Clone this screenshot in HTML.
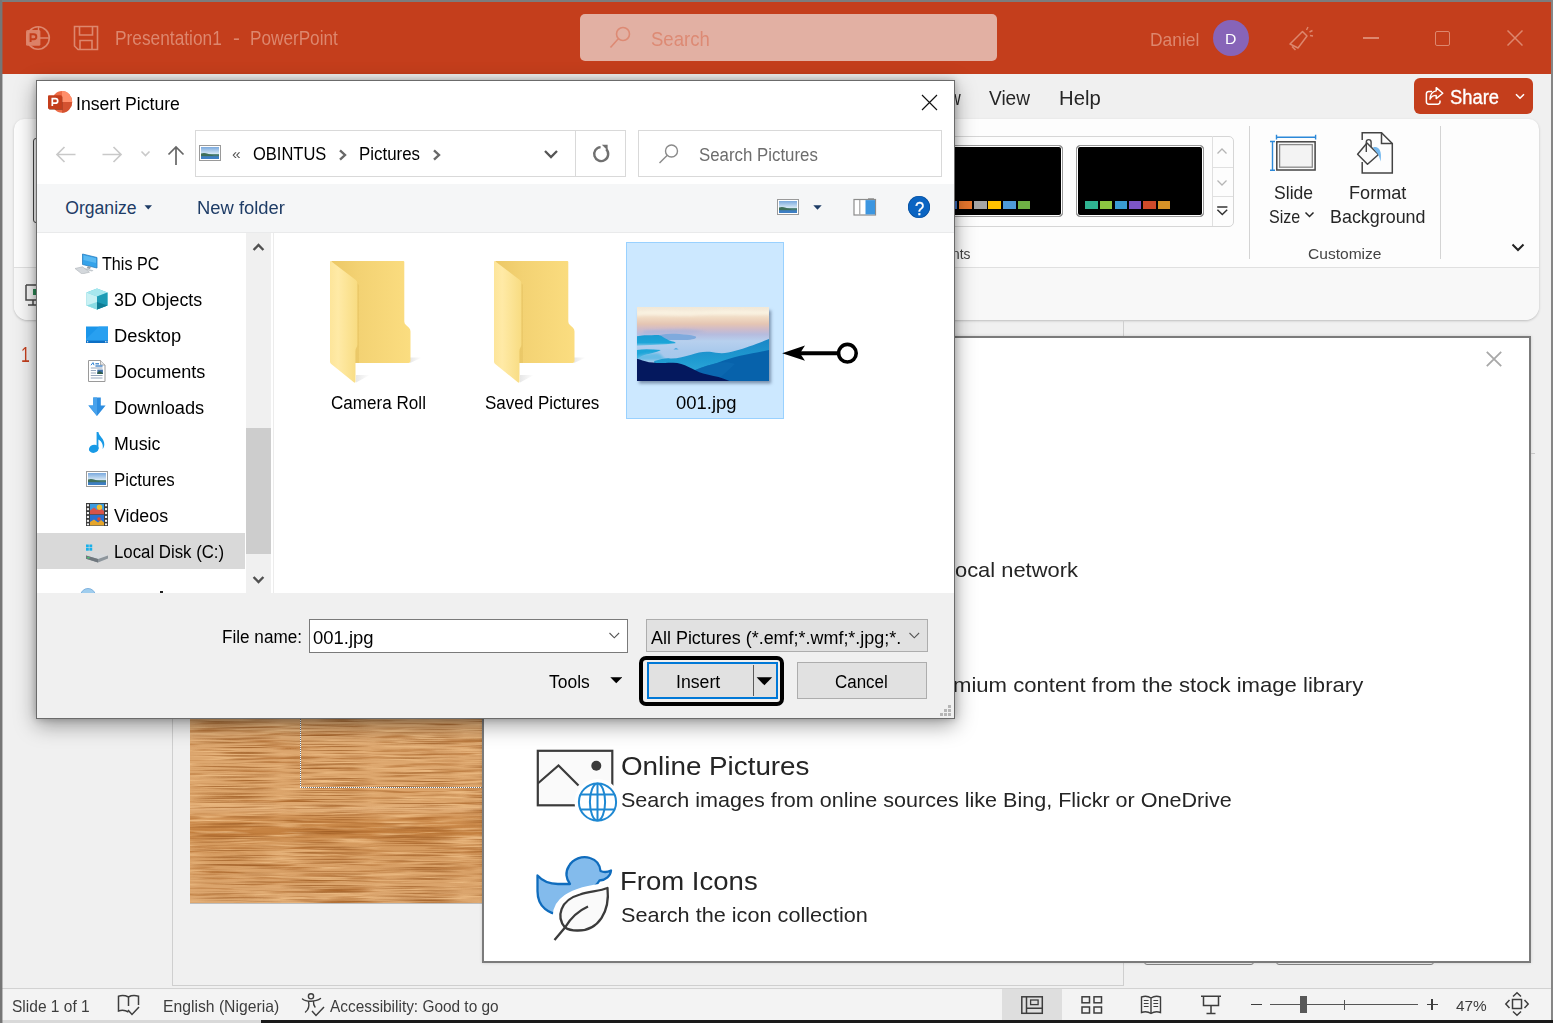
<!DOCTYPE html>
<html>
<head>
<meta charset="utf-8">
<title>Insert Picture - PowerPoint</title>
<style>
*{box-sizing:border-box;margin:0;padding:0}
html,body{width:1553px;height:1023px;overflow:hidden;background:#f0f0f0;font-family:"Liberation Sans",sans-serif;}
.a{position:absolute}
.t{position:absolute;white-space:nowrap;line-height:1;transform-origin:0 0}
#app{position:absolute;left:0;top:0;width:1553px;height:1023px;overflow:hidden}
</style>
</head>
<body>
<div id="app">
<div class="a" style="left:0px;top:0px;width:1553px;height:1023px;background:#f0f0f0;"></div>
<div class="a" style="left:2px;top:2px;width:1551px;height:72px;background:#c43e1c;"></div>
<svg class="a" style="left:24px;top:24px;" width="28" height="28" viewBox="0 0 28 28"><circle cx="14.1" cy="14" r="11.2" fill="none" stroke="#dd876e" stroke-width="1.6"/>
      <path d="M14.5 3 V14 H25.3" fill="none" stroke="#dd876e" stroke-width="1.4"/>
      <rect x="2" y="6" width="14.4" height="15.8" rx="1.5" fill="#dd876e" opacity=".92"/>
      <path d="M6.6 18 V10.2 H9.8 a2.5 2.5 0 0 1 0 5 H6.6" fill="none" stroke="#c43e1c" stroke-width="1.9"/></svg>
<svg class="a" style="left:73px;top:25px;" width="26" height="26" viewBox="0 0 26 26"><path d="M1.5 1.5 H24.5 V24.5 H5 L1.5 21 Z" fill="none" stroke="#dd876e" stroke-width="1.6"/>
      <path d="M6.5 1.5 V10 H19.5 V1.5 M7 24.5 V15.5 H19 V24.5" fill="none" stroke="#dd876e" stroke-width="1.6"/></svg>
<div class="t" style="left:114.97px;top:29.39px;font-size:19.5px;color:#dd876e;transform:scaleX(0.8873);">Presentation1</div>
<div class="t" style="left:233.20px;top:29.39px;font-size:19.5px;color:#dd876e;transform:scaleX(1.0600);">-</div>
<div class="t" style="left:250.18px;top:29.39px;font-size:19.5px;color:#dd876e;transform:scaleX(0.8804);">PowerPoint</div>
<div class="a" style="left:580px;top:14px;width:417px;height:47px;background:#e2b0a3;border-radius:5px"></div>
<svg class="a" style="left:608px;top:25px;" width="26" height="26" viewBox="0 0 26 26"><circle cx="15" cy="9" r="6.5" fill="none" stroke="#dd8a74" stroke-width="1.6"/><path d="M10.3 13.7 L2.5 22.5" stroke="#dd8a74" stroke-width="1.6" fill="none"/></svg>
<div class="t" style="left:651.32px;top:28.75px;font-size:20.5px;color:#dd8a74;transform:scaleX(0.9048);">Search</div>
<div class="t" style="left:1149.62px;top:29.82px;font-size:19px;color:#dd876e;transform:scaleX(0.9171);">Daniel</div>
<div class="a" style="left:1213px;top:20px;width:36px;height:36px;border-radius:50%;background:#8764b8"></div>
<div class="t" style="left:1225.03px;top:31.38px;font-size:15.5px;color:#fff;transform:scaleX(1.0162);">D</div>
<svg class="a" style="left:1287px;top:24px;" width="28" height="28" viewBox="0 0 28 28"><path d="M3 20 L15.5 7.5 L20 12 L11 24 Z M5 22.5 L8.5 26" fill="none" stroke="#dd876e" stroke-width="1.5" stroke-linejoin="round"/>
       <path d="M19.5 6 L21 3 M22.5 8 L25.5 6.5 M23 11.5 L26 12" stroke="#dd876e" stroke-width="1.4" fill="none"/></svg>
<div class="a" style="left:1363px;top:37px;width:16px;height:1.5px;background:#dd876e;"></div>
<div class="a" style="left:1435px;top:31px;width:15px;height:15px;border:1.5px solid #dd876e;border-radius:2px"></div>
<svg class="a" style="left:1507px;top:30px;" width="16" height="16" viewBox="0 0 16 16"><path d="M0.5 0.5 L15.5 15.5 M15.5 0.5 L0.5 15.5" stroke="#dd876e" stroke-width="1.5"/></svg>
<div class="a" style="left:2px;top:74px;width:1551px;height:48px;background:#f0f0f0;"></div>
<div class="t" style="left:949.21px;top:88.81px;font-size:19.6px;color:#262626;transform:scaleX(0.8276);">w</div>
<div class="t" style="left:989.30px;top:88.81px;font-size:19.6px;color:#262626;transform:scaleX(0.9738);">View</div>
<div class="t" style="left:1059.45px;top:88.81px;font-size:19.6px;color:#262626;transform:scaleX(1.0342);">Help</div>
<div class="a" style="left:1414px;top:78px;width:119px;height:36px;background:#c43e1c;border-radius:6px"></div>
<svg class="a" style="left:1424px;top:85px;" width="22" height="22" viewBox="0 0 22 22"><path d="M8 6.5 H4.6 A2.2 2.2 0 0 0 2.4 8.7 V17 A2.2 2.2 0 0 0 4.6 19.2 H13.8 A2.2 2.2 0 0 0 16 17 V15.5" fill="none" stroke="#fff" stroke-width="1.5"/>
      <path d="M12.2 2.6 L18.8 8.2 L12.2 13.6 V10.4 C9.2 10.4 7.3 11.6 6 14.2 C6.2 9.4 8.6 6.4 12.2 5.9 Z" fill="none" stroke="#fff" stroke-width="1.4" stroke-linejoin="round"/></svg>
<div class="t" style="left:1450.31px;top:87.27px;font-size:20px;color:#fff;transform:scaleX(0.9179);-webkit-text-stroke:.35px #fff">Share</div>
<svg class="a" style="left:1515px;top:93px;" width="10" height="7" viewBox="0 0 10 7"><path d="M1 1.2 L5 5.2 L9 1.2" fill="none" stroke="#fff" stroke-width="1.6"/></svg>
<div class="a" style="left:14px;top:119px;width:1525px;height:201px;background:#fdfdfd;border-radius:10px 10px 14px 14px;box-shadow:0 1px 2.5px rgba(0,0,0,.22)"></div>
<div class="a" style="left:14px;top:267px;width:1525px;height:1px;background:#e0e0e0;"></div>
<div class="a" style="left:14px;top:268px;width:1525px;height:52px;background:#f8f8f8;border-radius:0 0 14px 14px"></div>
<div class="a" style="left:33px;top:138px;width:6px;height:85px;background:#fff;border:1.5px solid #4a4a4a;border-radius:3px"></div>
<svg class="a" style="left:24px;top:283px;" width="16" height="24" viewBox="0 0 16 24"><path d="M2 2 H16 M2 2 V17 H16 M9 17 V22 M4 22 H16" fill="none" stroke="#4a4a4a" stroke-width="1.5"/><rect x="9" y="6" width="6" height="6" fill="#2e8b57"/></svg>
<div class="a" style="left:900px;top:136px;width:334px;height:91px;background:#fdfdfd;border:1px solid #d6d6d6;border-radius:5px"></div>
<div class="a" style="left:935px;top:145px;width:128px;height:72px;background:#000;border:1px solid #9a9a9a;border-radius:4px;box-shadow:0 0 0 1px #fff inset"></div><div class="a" style="left:944.5px;top:201px;width:12.5px;height:7.6px;background:#3c6fc4;"></div><div class="a" style="left:959px;top:201px;width:12.5px;height:7.6px;background:#e8772e;"></div><div class="a" style="left:974px;top:201px;width:12.5px;height:7.6px;background:#a5a5a5;"></div><div class="a" style="left:988px;top:201px;width:12.5px;height:7.6px;background:#ffc000;"></div><div class="a" style="left:1003px;top:201px;width:12.5px;height:7.6px;background:#4e9bd8;"></div><div class="a" style="left:1017.5px;top:201px;width:12.5px;height:7.6px;background:#6fb144;"></div>
<div class="a" style="left:1076px;top:145px;width:128px;height:72px;background:#000;border:1px solid #9a9a9a;border-radius:4px;box-shadow:0 0 0 1px #fff inset"></div><div class="a" style="left:1085px;top:201px;width:12.5px;height:7.6px;background:#2fb391;"></div><div class="a" style="left:1099.5px;top:201px;width:12.5px;height:7.6px;background:#8dc641;"></div><div class="a" style="left:1114.5px;top:201px;width:12.5px;height:7.6px;background:#3a9bd3;"></div><div class="a" style="left:1128.5px;top:201px;width:12.5px;height:7.6px;background:#7c55c7;"></div><div class="a" style="left:1143px;top:201px;width:12.5px;height:7.6px;background:#cf4a2b;"></div><div class="a" style="left:1157.5px;top:201px;width:12.5px;height:7.6px;background:#d79327;"></div>
<div class="a" style="left:1212px;top:136px;width:1px;height:90px;background:#e0e0e0;"></div>
<div class="a" style="left:1212px;top:167px;width:21px;height:1px;background:#e0e0e0;"></div>
<div class="a" style="left:1212px;top:196px;width:21px;height:1px;background:#e0e0e0;"></div>
<svg class="a" style="left:1216px;top:147.3px;" width="12" height="8" viewBox="0 0 12 8"><path d="M1.5 6.5 L6 2 L10.5 6.5" fill="none" stroke="#b5b5b5" stroke-width="1.3"/></svg>
<svg class="a" style="left:1216px;top:179px;" width="12" height="8" viewBox="0 0 12 8"><path d="M1.5 1.5 L6 6 L10.5 1.5" fill="none" stroke="#b5b5b5" stroke-width="1.3"/></svg>
<svg class="a" style="left:1215px;top:205px;" width="14" height="14" viewBox="0 0 14 14"><path d="M2.2 2 H12.4" stroke="#333" stroke-width="1.5"/><path d="M2.4 4.8 L7.3 9.5 L12.2 4.8" fill="none" stroke="#333" stroke-width="1.5"/></svg>
<div class="t" style="left:952.08px;top:246.20px;font-size:15px;color:#444;transform:scaleX(0.9189);">nts</div>
<div class="a" style="left:1249px;top:126px;width:1px;height:133px;background:#d4d4d4;"></div>
<div class="a" style="left:1440px;top:126px;width:1px;height:133px;background:#d4d4d4;"></div>
<svg class="a" style="left:1269px;top:132px;" width="48" height="40" viewBox="0 0 48 40"><path d="M7.5 5.2 H46.6 M7.5 2.8 V7.6 M46.6 2.8 V7.6 M3.5 9.5 V38.3 M1 9.5 H6 M1 38.3 H6" stroke="#2b88d8" stroke-width="1.4" fill="none"/>
      <rect x="7.8" y="9.8" width="38.3" height="28.2" fill="#fafafa" stroke="#444" stroke-width="1.5"/>
      <rect x="10.6" y="12.6" width="32.7" height="22.6" fill="#f3f3f3" stroke="#8a8a8a" stroke-width="1.3"/></svg>
<div class="t" style="left:1273.61px;top:182.82px;font-size:19px;color:#262626;transform:scaleX(0.9252);">Slide</div>
<div class="t" style="left:1269.37px;top:206.82px;font-size:19px;color:#262626;transform:scaleX(0.8451);">Size</div>
<svg class="a" style="left:1304px;top:211px;" width="11" height="8" viewBox="0 0 11 8"><path d="M1.5 1.5 L5.5 5.5 L9.5 1.5" fill="none" stroke="#262626" stroke-width="1.5"/></svg>
<svg class="a" style="left:1356px;top:131px;" width="40" height="44" viewBox="0 0 40 44"><path d="M6.2 31 V42 H36.3 V12.5 L25.5 1.8 H6.2 V9" fill="none" stroke="#444" stroke-width="1.5"/>
      <path d="M25.5 1.8 V12.5 H36.3" fill="none" stroke="#444" stroke-width="1.5"/>
      <path d="M11 12 L22.5 23.5 L11.5 33.3 L1.6 23.3 Z" fill="#fafafa" stroke="#444" stroke-width="1.5" stroke-linejoin="round"/>
      <path d="M10.3 21 V11 a2.4 2.4 0 0 1 4.8 0 V16" fill="none" stroke="#444" stroke-width="1.4"/>
      <path d="M17 16.5 C22 14.5 26.5 19 24.5 30.5 C23.5 26 22.5 23 19.8 20.5 Z" fill="#74b8ee"/></svg>
<div class="t" style="left:1348.57px;top:182.82px;font-size:19px;color:#262626;transform:scaleX(0.9532);">Format</div>
<div class="t" style="left:1329.59px;top:206.82px;font-size:19px;color:#262626;transform:scaleX(0.9418);">Background</div>
<div class="t" style="left:1308.25px;top:245.78px;font-size:15.5px;color:#444;transform:scaleX(1.0035);">Customize</div>
<svg class="a" style="left:1511px;top:243px;" width="14" height="10" viewBox="0 0 14 10"><path d="M1.5 1.5 L7 7 L12.5 1.5" fill="none" stroke="#222" stroke-width="2"/></svg>
<div class="a" style="left:172px;top:320px;width:1px;height:666px;background:#cfcfcf;"></div>
<div class="a" style="left:172px;top:985px;width:952px;height:1px;background:#cfcfcf;"></div>
<div class="a" style="left:1123px;top:320px;width:1px;height:666px;background:#cfcfcf;"></div>
<div class="t" style="left:21.42px;top:344.28px;font-size:22px;color:#c43e1c;transform:scaleX(0.7179);">1</div>
<svg class="a" style="left:190px;top:420px" width="860" height="483" viewBox="0 0 860 483">
      <defs>
       <filter id="wd" x="0" y="0" width="100%" height="100%" color-interpolation-filters="sRGB">
         <feTurbulence type="fractalNoise" baseFrequency="0.016 0.30" numOctaves="3" seed="11" result="n"/>
         <feColorMatrix in="n" type="matrix" values="0 0 0 0 0.66  0 0 0 0 0.38  0 0 0 0 0.14  2.2 0 0 0 -1.16" result="dk"/>
         <feColorMatrix in="n" type="matrix" values="0 0 0 0 0.93  0 0 0 0 0.74  0 0 0 0 0.52  0 3.0 0 0 -1.45" result="lt"/>
         <feTurbulence type="fractalNoise" baseFrequency="0.011 1.0" numOctaves="2" seed="3" result="n2"/>
         <feColorMatrix in="n2" type="matrix" values="0 0 0 0 0.60  0 0 0 0 0.34  0 0 0 0 0.12  0 0 2.6 0 -1.28" result="fine"/>
         <feMerge><feMergeNode in="SourceGraphic"/><feMergeNode in="lt"/><feMergeNode in="dk"/><feMergeNode in="fine"/></feMerge>
       </filter>
       <linearGradient id="wg" x1="0" y1="0" x2="0" y2="1">
         <stop offset="0" stop-color="#dca770"/><stop offset="0.62" stop-color="#dda871"/>
         <stop offset="0.79" stop-color="#dda66c"/><stop offset="0.805" stop-color="#e3b07a"/><stop offset="0.825" stop-color="#cf9052"/>
         <stop offset="0.855" stop-color="#c4803f"/><stop offset="0.875" stop-color="#d59a5e"/>
         <stop offset="1" stop-color="#dda871"/>
       </linearGradient>
      </defs>
      <rect x="0" y="0" width="860" height="483" fill="url(#wg)" filter="url(#wd)"/>
    </svg>
<div class="a" style="left:189.5px;top:903px;width:293px;height:1px;background:#bdbdbd;"></div>
<div class="a" style="left:300px;top:640px;width:1px;height:148px;background:repeating-linear-gradient(to bottom,#fff 0 1px,#6f6f6f 1px 2px)"></div>
<div class="a" style="left:300px;top:787px;width:400px;height:1px;background:repeating-linear-gradient(to right,#fff 0 1px,#6f6f6f 1px 2px)"></div>
<div class="a" style="left:1144px;top:954px;width:110px;height:10.5px;background:#f0f0f0;border:1.5px solid #858585;border-radius:0 0 3px 3px"></div>
<div class="a" style="left:1276px;top:954px;width:158px;height:10.5px;background:#f0f0f0;border:1.5px solid #858585;border-radius:0 0 3px 3px"></div>
<div class="a" style="left:482px;top:336px;width:1049px;height:627px;background:#fff;border:2px solid #7b7b7b;box-shadow:0 0 3px rgba(0,0,0,.15)"></div>
<div class="a" style="left:1531px;top:453px;width:4px;height:1px;background:#c8c8c8;"></div>
<svg class="a" style="left:1486px;top:351px;" width="16" height="16" viewBox="0 0 16 16"><path d="M0.8 0.8 L15.2 15.2 M15.2 0.8 L0.8 15.2" stroke="#a8a8a8" stroke-width="1.8"/></svg>
<div class="t" style="left:955.22px;top:558.72px;font-size:21px;color:#252525;transform:scaleX(1.0426);">ocal network</div>
<div class="t" style="left:952.88px;top:673.52px;font-size:21px;color:#252525;transform:scaleX(1.0523);">mium content from the stock image library</div>
<svg class="a" style="left:534px;top:747px;" width="86" height="78" viewBox="0 0 86 78"><rect x="3.8" y="3.8" width="74.5" height="54.5" fill="#fafafa" stroke="#3b3b3b" stroke-width="2.2"/>
      <path d="M3.8 36.5 L24.5 18.5 L44.5 38.5" fill="none" stroke="#3b3b3b" stroke-width="2.2"/>
      <circle cx="62.3" cy="18.8" r="5" fill="#3b3b3b"/>
      <circle cx="63.5" cy="55" r="23" fill="#fff"/>
      <g fill="none" stroke="#1e88d2" stroke-width="2">
        <circle cx="63.5" cy="55" r="18.6"/>
        <ellipse cx="63.5" cy="55" rx="7.6" ry="18.6"/>
        <path d="M63.5 36.4 V73.6 M46.8 47.5 H80.2 M46.8 62.5 H80.2"/>
      </g></svg>
<div class="t" style="left:620.94px;top:752.84px;font-size:26.3px;color:#252525;transform:scaleX(1.0568);">Online Pictures</div>
<div class="t" style="left:621.23px;top:788.82px;font-size:21px;color:#252525;transform:scaleX(1.0261);">Search images from online sources like Bing, Flickr or OneDrive</div>
<svg class="a" style="left:534px;top:853px;" width="82" height="88" viewBox="0 0 82 88"><path d="M3.5 22.5 C8 27.5 15 31 24 31 H36 C32 26 31 19 35 13 C39 6 48 2.5 56 5 C63 7 66 13 66.5 18 C70 19.5 74 19 77 17.5 C76.5 23 72 27 65.5 27.5 C63 32 58 35.5 53 36.5 L26 61.5 C16 61 3.5 55 3.5 38 Z" fill="#83bbec" stroke="#0f6cbd" stroke-width="2.3" stroke-linejoin="round"/>
      <path d="M24 68 C20 50 36 38 74 34.5 C79 60 64 80 34 74 Z" fill="#fff" stroke="#fff" stroke-width="9" stroke-linejoin="round"/>
      <path d="M31 74.5 C22 64 26 47 46 41.5 C56 38.5 66 38 73.5 35 C76 58 65 78 43 77.5 C38 77.5 34 76.5 31 74.5 Z" fill="#fafafa" stroke="#3b3b3b" stroke-width="2.3" stroke-linejoin="round"/>
      <path d="M20.5 87 L31 74.5 C36 66 44 58 54 53.5" fill="none" stroke="#3b3b3b" stroke-width="2.3"/></svg>
<div class="t" style="left:619.91px;top:868.04px;font-size:26.3px;color:#252525;transform:scaleX(1.0467);">From Icons</div>
<div class="t" style="left:621.23px;top:903.82px;font-size:21px;color:#252525;transform:scaleX(1.0316);">Search the icon collection</div>
<div class="a" style="left:2px;top:988px;width:1551px;height:1px;background:#d2d2d2;"></div>
<div class="a" style="left:2px;top:989px;width:1551px;height:31px;background:#f3f3f3;"></div>
<div class="t" style="left:11.79px;top:997.63px;font-size:16.5px;color:#3d3d3d;transform:scaleX(0.9415);">Slide 1 of 1</div>
<svg class="a" style="left:117px;top:993px;" width="24" height="24" viewBox="0 0 24 24"><path d="M11.5 4 C8 2.3 4.5 2.3 1.5 3.2 V18 C4.5 17 8 17 11.5 19 M11.5 4 V13 M11.5 4 C14.5 2.3 18 2.3 21.5 3.2 V12" fill="none" stroke="#3d3d3d" stroke-width="1.5"/>
      <path d="M11 17 L15 21.5 L22 14" fill="none" stroke="#3d3d3d" stroke-width="1.5"/></svg>
<div class="t" style="left:163.31px;top:997.63px;font-size:16.5px;color:#3d3d3d;transform:scaleX(0.9520);">English (Nigeria)</div>
<svg class="a" style="left:301px;top:992px;" width="25" height="26" viewBox="0 0 25 26"><circle cx="10" cy="4.3" r="2.6" fill="none" stroke="#3d3d3d" stroke-width="1.4"/>
      <path d="M1.5 7 C5 10 15 10 19.5 6.5 M7.5 9.3 C8.5 14 7 18 4.5 20 M12.5 9.3 C12.3 12 12.8 13.5 14 15" fill="none" stroke="#3d3d3d" stroke-width="1.4" stroke-linecap="round"/>
      <path d="M11 19 L15 23.5 L23 15" fill="none" stroke="#3d3d3d" stroke-width="1.5"/></svg>
<div class="t" style="left:329.50px;top:997.63px;font-size:16.5px;color:#3d3d3d;transform:scaleX(0.9333);">Accessibility: Good to go</div>
<div class="a" style="left:1002px;top:989px;width:60px;height:31px;background:#dedede;"></div>
<svg class="a" style="left:1020px;top:995px;" width="24" height="20" viewBox="0 0 24 20"><rect x="1.8" y="1.8" width="20.5" height="16.5" fill="none" stroke="#3d3d3d" stroke-width="1.5"/>
      <path d="M6.5 1.8 V18.3 M6.5 13.3 H22" stroke="#3d3d3d" stroke-width="1.5" fill="none"/><rect x="10.6" y="5" width="7.5" height="4.6" fill="none" stroke="#3d3d3d" stroke-width="1.3"/></svg>
<svg class="a" style="left:1080px;top:995px;" width="24" height="20" viewBox="0 0 24 20"><g fill="none" stroke="#3d3d3d" stroke-width="1.5"><rect x="2" y="1.8" width="7.5" height="6"/><rect x="14" y="1.8" width="7.5" height="6"/><rect x="2" y="12" width="7.5" height="6"/><rect x="14" y="12" width="7.5" height="6"/></g></svg>
<svg class="a" style="left:1139px;top:994px;" width="24" height="22" viewBox="0 0 24 22"><g fill="none" stroke="#3d3d3d" stroke-width="1.4"><path d="M12 4 C9 2 5.5 2 2.5 3 V18.5 C5.5 17.5 9 17.5 12 19.5 C15 17.5 18.5 17.5 21.5 18.5 V3 C18.5 2 15 2 12 4 Z M12 4 V19.5"/>
      <path d="M4.8 6.5 H9.6 M4.8 9.5 H9.6 M4.8 12.5 H9.6 M14.4 6.5 H19.2 M14.4 9.5 H19.2 M14.4 12.5 H19.2" stroke-width="1.1"/></g></svg>
<svg class="a" style="left:1199px;top:994px;" width="24" height="22" viewBox="0 0 24 22"><g fill="none" stroke="#3d3d3d" stroke-width="1.5"><path d="M2 2.2 H22 M4.5 2.2 V11.5 H19.5 V2.2 M12 11.5 V19 M7.5 19.6 H16.5"/></g></svg>
<div class="a" style="left:1251px;top:1004px;width:11px;height:1.3px;background:#3d3d3d;"></div>
<div class="a" style="left:1270px;top:1004px;width:148px;height:1.3px;background:#555;"></div>
<div class="a" style="left:1343.5px;top:1000px;width:1.3px;height:9.5px;background:#555;"></div>
<div class="a" style="left:1299.5px;top:996px;width:7.5px;height:17px;background:#585858;"></div>
<div class="a" style="left:1426.5px;top:1004px;width:11px;height:1.3px;background:#3d3d3d;"></div>
<div class="a" style="left:1431.3px;top:999px;width:1.3px;height:11px;background:#3d3d3d;"></div>
<div class="t" style="left:1456.25px;top:997.78px;font-size:15.5px;color:#3d3d3d;transform:scaleX(0.9917);">47%</div>
<svg class="a" style="left:1504px;top:991px;" width="26" height="26" viewBox="0 0 26 26"><g fill="none" stroke="#3d3d3d" stroke-width="1.5"><rect x="8.5" y="8.5" width="9" height="9"/>
      <path d="M9 5.5 L13 1.8 L17 5.5 M9 20.5 L13 24.2 L17 20.5 M5.5 9 L1.8 13 L5.5 17 M20.5 9 L24.2 13 L20.5 17"/></g></svg>
<div class="a" style="left:2px;top:1020px;width:260px;height:3px;background:#d9d9d9;"></div>
<div class="a" style="left:261px;top:1020px;width:1292px;height:3px;background:#1a1a1a;"></div>
<div class="a" style="left:0px;top:0px;width:1553px;height:2px;background:#7c7c7c;"></div>
<div class="a" style="left:0px;top:0px;width:2px;height:1023px;background:#767676;"></div>
<div class="a" style="left:2px;top:2px;width:1px;height:1021px;background:rgba(118,118,118,.45);"></div>
<div class="a" style="left:1551px;top:0px;width:2px;height:1020px;background:#868686;"></div>
<div class="a" style="left:36px;top:80px;width:919px;height:639px;background:#f0f0f0;border:1px solid #6b6b6b;box-shadow:0 6px 20px rgba(0,0,0,.38),0 0 7px rgba(0,0,0,.22)"></div>
<div class="a" style="left:37px;top:81px;width:917px;height:103px;background:#fff;"></div>
<svg class="a" style="left:47px;top:90px;" width="28" height="24" viewBox="0 0 28 24"><ellipse cx="15" cy="11.9" rx="10.2" ry="10.9" fill="#ed6c47"/><path d="M15 1 A10.2 10.9 0 0 1 25.2 11.9 H15 Z" fill="#ff8f6b"/><path d="M15 11.9 H25.2 A10.2 10.9 0 0 1 15 22.8 Z" fill="#d35230"/>
      <rect x="2.2" y="6.6" width="13.4" height="13.4" fill="#7a2a12" opacity=".55"/>
      <rect x="1" y="5.3" width="13.8" height="13.8" rx="1" fill="#c43e1c"/>
      <path d="M5.3 16 V8.6 H8.4 a2.3 2.3 0 0 1 0 4.6 H5.3" fill="none" stroke="#fff" stroke-width="1.7"/></svg>
<div class="t" style="left:76.00px;top:96.00px;font-size:17.6px;color:#000;transform:scaleX(1.0025);">Insert Picture</div>
<svg class="a" style="left:921px;top:94px;" width="17" height="17" viewBox="0 0 17 17"><path d="M1 1 L16 16 M16 1 L1 16" stroke="#111" stroke-width="1.15"/></svg>
<svg class="a" style="left:55px;top:145px;" width="22" height="19" viewBox="0 0 22 19"><path d="M20.5 9.5 H2.5 M9.5 2 L2 9.5 L9.5 17" fill="none" stroke="#c9c9c9" stroke-width="1.7"/></svg>
<svg class="a" style="left:101px;top:145px;" width="22" height="19" viewBox="0 0 22 19"><path d="M1.5 9.5 H19.5 M12.5 2 L20 9.5 L12.5 17" fill="none" stroke="#c9c9c9" stroke-width="1.7"/></svg>
<svg class="a" style="left:140px;top:150px;" width="11" height="8" viewBox="0 0 11 8"><path d="M1.5 1.5 L5.5 5.5 L9.5 1.5" fill="none" stroke="#c9c9c9" stroke-width="1.6"/></svg>
<svg class="a" style="left:166px;top:145px;" width="20" height="21" viewBox="0 0 20 21"><path d="M10 20 V2 M2.5 9.5 L10 2 L17.5 9.5" fill="none" stroke="#666" stroke-width="1.7"/></svg>
<div class="a" style="left:195px;top:130px;width:431px;height:47px;background:#fff;border:1px solid #d9d9d9"></div>
<div class="a" style="left:575px;top:131px;width:1px;height:45px;background:#d9d9d9;"></div>
<svg class="a" style="left:199px;top:145px" width="22" height="16" viewBox="0 0 22 16">
      <defs><linearGradient id="psk199" x1="0" y1="0" x2="0" y2="1"><stop offset="0" stop-color="#7aa9dd"/><stop offset="0.55" stop-color="#d4e6f4"/><stop offset="0.6" stop-color="#5c8d7d"/><stop offset="1" stop-color="#3d77b8"/></linearGradient></defs>
      <rect x="0.5" y="0.5" width="21" height="15" fill="#fff" stroke="#9a9a9a"/>
      <rect x="2" y="2" width="18" height="12" fill="url(#psk199)"/>
      <path d="M2 8.5 C6 7 9 9 13 10 C16 10.8 18 10.5 20 10.2 V11.5 H2 Z" fill="#3f6f5a"/>
      <rect x="2" y="11.3" width="18" height="2.7" fill="#3d7ec3"/></svg>
<div class="t" style="left:231.94px;top:147.05px;font-size:14px;color:#555;transform:scaleX(1.1111);">«</div>
<div class="t" style="left:253.30px;top:146.00px;font-size:17.6px;color:#000;transform:scaleX(0.9377);">OBINTUS</div>
<svg class="a" style="left:338px;top:149px;" width="10" height="12" viewBox="0 0 10 12"><path d="M2 1.3 L7 6 L2 10.7" fill="none" stroke="#686868" stroke-width="2.4"/></svg>
<div class="t" style="left:358.80px;top:146.00px;font-size:17.6px;color:#000;transform:scaleX(0.9593);">Pictures</div>
<svg class="a" style="left:432px;top:149px;" width="10" height="12" viewBox="0 0 10 12"><path d="M2 1.3 L7 6 L2 10.7" fill="none" stroke="#686868" stroke-width="2.4"/></svg>
<svg class="a" style="left:543px;top:149px;" width="16" height="11" viewBox="0 0 16 11"><path d="M2 2 L8 8 L14 2" fill="none" stroke="#555" stroke-width="2.3"/></svg>
<svg class="a" style="left:591px;top:144px;" width="20" height="20" viewBox="0 0 20 20"><path d="M15.2 5.2 A7 7 0 1 1 9.6 3.1" fill="none" stroke="#707070" stroke-width="2.4"/><path d="M10.8 0.8 H16.6 V6.6 Z" fill="#707070"/></svg>
<div class="a" style="left:638px;top:130px;width:304px;height:47px;background:#fff;border:1px solid #d9d9d9"></div>
<svg class="a" style="left:658px;top:143px;" width="22" height="22" viewBox="0 0 22 22"><circle cx="13.5" cy="8" r="6" fill="none" stroke="#8a8a8a" stroke-width="1.4"/><path d="M9.3 12.2 L1.5 20" stroke="#8a8a8a" stroke-width="1.4"/></svg>
<div class="t" style="left:698.78px;top:146.50px;font-size:17.6px;color:#6d6d6d;transform:scaleX(0.9571);">Search Pictures</div>
<div class="a" style="left:37px;top:184px;width:917px;height:49px;background:#f5f6f7;"></div>
<div class="a" style="left:37px;top:232px;width:917px;height:1px;background:#e9eaeb;"></div>
<div class="t" style="left:65.25px;top:200.00px;font-size:17.6px;color:#1e3c66;transform:scaleX(1.0000);">Organize</div>
<svg class="a" style="left:143.5px;top:205px;" width="9" height="5" viewBox="0 0 9 5"><path d="M0.5 0.3 H8 L4.25 4.5 Z" fill="#1e3c66"/></svg>
<div class="t" style="left:196.69px;top:200.00px;font-size:17.6px;color:#1e3c66;transform:scaleX(1.0456);">New folder</div>
<svg class="a" style="left:777px;top:199px" width="22" height="16" viewBox="0 0 22 16">
      <defs><linearGradient id="psk777" x1="0" y1="0" x2="0" y2="1"><stop offset="0" stop-color="#7aa9dd"/><stop offset="0.55" stop-color="#d4e6f4"/><stop offset="0.6" stop-color="#5c8d7d"/><stop offset="1" stop-color="#3d77b8"/></linearGradient></defs>
      <rect x="0.5" y="0.5" width="21" height="15" fill="#fff" stroke="#9a9a9a"/>
      <rect x="2" y="2" width="18" height="12" fill="url(#psk777)"/>
      <path d="M2 8.5 C6 7 9 9 13 10 C16 10.8 18 10.5 20 10.2 V11.5 H2 Z" fill="#3f6f5a"/>
      <rect x="2" y="11.3" width="18" height="2.7" fill="#3d7ec3"/></svg>
<svg class="a" style="left:812.5px;top:204.5px;" width="9" height="5" viewBox="0 0 9 5"><path d="M0.3 0.3 H8.7 L4.5 4.7 Z" fill="#1e3c66"/></svg>
<svg class="a" style="left:853px;top:198px;" width="24" height="18" viewBox="0 0 24 18"><rect x="1" y="1.5" width="21.5" height="15.5" fill="#fff" stroke="#8c8c8c" stroke-width="1.2"/><rect x="12.5" y="2.1" width="9.5" height="14.3" fill="#3c96e0"/>
      <path d="M6.8 2 V16.5" stroke="#9a9a9a" stroke-width="1.1"/><path d="M15.5 0.6 h1 m1 0 h1 m1 0 h1" stroke="#555" stroke-width="1"/></svg>
<div class="a" style="left:908px;top:196px;width:22px;height:22px;border-radius:50%;background:#0a64c2;box-shadow:0 0 0 .6px #0a4f9c inset"></div>
<div class="t" style="left:914.54px;top:199.66px;font-size:18px;color:#fff;transform:scaleX(0.9222);-webkit-text-stroke:.3px #fff">?</div>
<div class="a" style="left:37px;top:233px;width:209px;height:360px;background:#fff;"></div>
<div class="a" style="left:37px;top:533px;width:208px;height:36px;background:#d9d9d9;"></div>
<div class="t" style="left:102.17px;top:255.70px;font-size:17.6px;color:#000;transform:scaleX(0.9159);">This PC</div>
<div class="t" style="left:114.29px;top:291.70px;font-size:17.6px;color:#000;transform:scaleX(1.0140);">3D Objects</div>
<div class="t" style="left:114.20px;top:327.70px;font-size:17.6px;color:#000;transform:scaleX(1.0410);">Desktop</div>
<div class="t" style="left:114.22px;top:363.70px;font-size:17.6px;color:#000;transform:scaleX(1.0259);">Documents</div>
<div class="t" style="left:114.21px;top:399.70px;font-size:17.6px;color:#000;transform:scaleX(1.0360);">Downloads</div>
<div class="t" style="left:114.34px;top:435.70px;font-size:17.6px;color:#000;transform:scaleX(1.0102);">Music</div>
<div class="t" style="left:114.40px;top:471.70px;font-size:17.6px;color:#000;transform:scaleX(0.9561);">Pictures</div>
<div class="t" style="left:114.00px;top:507.70px;font-size:17.6px;color:#000;transform:scaleX(1.0104);">Videos</div>
<div class="t" style="left:114.41px;top:543.70px;font-size:17.6px;color:#000;transform:scaleX(0.9547);">Local Disk (C:)</div>
<svg class="a" style="left:74px;top:253px;" width="24" height="21" viewBox="0 0 24 21"><path d="M8.5 1 L23 4.5 V15 L8.5 11.5 Z" fill="#35a3ea" stroke="#2a7fc0" stroke-width=".8"/><path d="M9.5 2.3 L22 5.3 V10 L9.5 7 Z" fill="#69c2f5" opacity=".7"/>
      <path d="M14 13 L17 13.8 L16 16 L12.5 15.2 Z" fill="#9aa3ab"/><path d="M10 15 L19.5 17.2 L18 18.4 L8.6 16.2 Z" fill="#c3c9ce"/>
      <path d="M1 15.5 L8.5 13.8 L15.5 19.2 L8 21 Z" fill="#d4d8dc" stroke="#aeb4b9" stroke-width=".6"/></svg><svg class="a" style="left:86px;top:288px;" width="22" height="22" viewBox="0 0 22 22"><path d="M11 0.5 L21.5 4.5 V17.5 L11 21.5 L0.5 17.5 V4.5 Z" fill="#52c8d8"/><path d="M11 0.5 L21.5 4.5 L11 8.5 L0.5 4.5 Z" fill="#a6e7ee"/>
      <path d="M0.5 4.5 L11 8.5 V21.5 L0.5 17.5 Z" fill="#c9f1f4"/><path d="M11 8.5 L21.5 4.5 V17.5 L11 21.5 Z" fill="#1d9bb5"/><path d="M11 14 L21.5 17.5 L11 21.5 Z" fill="#107c94"/><path d="M0.5 17.5 L11 14 V21.5 Z" fill="#8adbe3"/></svg><svg class="a" style="left:86px;top:326px;" width="22" height="18" viewBox="0 0 22 18"><rect x="0" y="0.5" width="22" height="16.5" fill="#1b96ea"/><path d="M0 13 L13 0.5 H22 V17 H0 Z" fill="#2ea4f2" opacity=".7"/><rect x="0" y="14.6" width="22" height="2.4" fill="#0d6fc4"/><rect x="1" y="15.3" width="1.2" height="1" fill="#fff"/><rect x="19" y="15.3" width="1" height="1" fill="#fff"/><rect x="20.5" y="15.3" width="1" height="1" fill="#fff"/></svg><svg class="a" style="left:88px;top:360px;" width="18" height="22" viewBox="0 0 18 22"><path d="M0.5 0.5 H12.5 L17 5 V21.5 H0.5 Z" fill="#fff" stroke="#9a9a9a"/><path d="M12.5 0.5 V5 H17" fill="#e8e8e8" stroke="#9a9a9a" stroke-width=".8"/>
      <path d="M3 5.2 L5 2.6 L6 5.2" fill="none" stroke="#2a7fd4" stroke-width="1"/><path d="M7.5 3.8 H11 M7.5 6 H14.5 M2.8 8 H14.5 M2.8 10.5 H8 M2.8 13 H8 M2.8 15.5 H14.5 M2.8 18 H14.5" stroke="#8a9db5" stroke-width=".9"/><path d="M7.5 3.8 H11 M7.5 6 H14.5" stroke="#2a7fd4" stroke-width="1"/>
      <rect x="9.3" y="9.6" width="5.6" height="4.4" fill="#3e6ea8"/><path d="M9.3 12.6 L11.5 11 L14.9 13 V14 H9.3 Z" fill="#2f5d4a"/></svg><svg class="a" style="left:88px;top:397px;" width="18" height="20" viewBox="0 0 18 20"><path d="M5.2 0.5 H12.8 V8.5 H17.6 L9 19 L0.4 8.5 H5.2 Z" fill="#2d8de0"/><path d="M5.2 0.5 H9 V19 L0.4 8.5 H5.2 Z" fill="#48a2ec"/></svg><svg class="a" style="left:88px;top:431px;" width="18" height="23" viewBox="0 0 18 23"><ellipse cx="5.8" cy="17.8" rx="4.9" ry="4" fill="#189ae6" transform="rotate(-18 5.8 17.8)"/><path d="M8.6 18 V1 H10.4 C11 5.5 16.5 7.5 16.3 13.5 C16.2 15.6 15.4 17 14.6 18 C15.8 13 12.5 9.5 10.4 8.6 V18 Z" fill="#189ae6"/></svg><svg class="a" style="left:86px;top:471px" width="22" height="16" viewBox="0 0 22 16">
      <defs><linearGradient id="psk86" x1="0" y1="0" x2="0" y2="1"><stop offset="0" stop-color="#7aa9dd"/><stop offset="0.55" stop-color="#d4e6f4"/><stop offset="0.6" stop-color="#5c8d7d"/><stop offset="1" stop-color="#3d77b8"/></linearGradient></defs>
      <rect x="0.5" y="0.5" width="21" height="15" fill="#fff" stroke="#9a9a9a"/>
      <rect x="2" y="2" width="18" height="12" fill="url(#psk86)"/>
      <path d="M2 8.5 C6 7 9 9 13 10 C16 10.8 18 10.5 20 10.2 V11.5 H2 Z" fill="#3f6f5a"/>
      <rect x="2" y="11.3" width="18" height="2.7" fill="#3d7ec3"/></svg><svg class="a" style="left:86px;top:503px;" width="22" height="23" viewBox="0 0 22 23"><rect x="0" y="0" width="22" height="23" fill="#3a3a3a"/><rect x="4" y="0.8" width="14" height="10.4" fill="#3b9be0"/><rect x="4" y="12" width="14" height="10.4" fill="#2b6fd1"/>
      <path d="M4 7.5 L8 4.5 L11 7 L14 4 L18 8 V11.2 H4 Z" fill="#d9534a"/><circle cx="13.5" cy="4.3" r="2.7" fill="#f2c12e"/><path d="M4 19 L8 16.5 L12 19.5 L15 17 L18 19.5 V22.4 H4 Z" fill="#e6a52a"/><circle cx="13" cy="16" r="1.8" fill="#d94a3a"/>
      <g fill="#f2f2f2"><rect x="0.9" y="1.2" width="2.1" height="2.1"/><rect x="0.9" y="5.1" width="2.1" height="2.1"/><rect x="0.9" y="9" width="2.1" height="2.1"/><rect x="0.9" y="12.9" width="2.1" height="2.1"/><rect x="0.9" y="16.8" width="2.1" height="2.1"/><rect x="0.9" y="20.4" width="2.1" height="1.8"/>
      <rect x="19" y="1.2" width="2.1" height="2.1"/><rect x="19" y="5.1" width="2.1" height="2.1"/><rect x="19" y="9" width="2.1" height="2.1"/><rect x="19" y="12.9" width="2.1" height="2.1"/><rect x="19" y="16.8" width="2.1" height="2.1"/><rect x="19" y="20.4" width="2.1" height="1.8"/></g></svg><svg class="a" style="left:85px;top:544px;" width="24" height="19" viewBox="0 0 24 19"><g fill="#19b0ea"><rect x="1" y="0.5" width="2.8" height="2.8"/><rect x="4.4" y="0.5" width="2.8" height="2.8"/><rect x="1" y="3.9" width="2.8" height="2.8"/><rect x="4.4" y="3.9" width="2.8" height="2.8"/></g>
      <path d="M1 11.5 L9 8.3 L23 11.5 V14.5 L13 18.5 L1 14.8 Z" fill="#d7dadd"/><path d="M1 11.5 L13 15 L23 11.5 V14.5 L13 18.5 L1 14.8 Z" fill="#8e969c"/><path d="M1 11.5 L13 15 V18.5 L1 14.8 Z" fill="#6f777d"/><rect x="2.3" y="13.2" width="2.2" height="1.1" fill="#38e06b"/></svg><div class="a" style="left:80px;top:588px;width:16px;height:5px;overflow:hidden"><div style="width:16px;height:16px;border-radius:50%;background:#9fcdee;border:1px solid #7fb2de"></div></div><div class="a" style="left:160px;top:590.5px;width:3px;height:2px;background:#222;"></div>
<div class="a" style="left:246px;top:233px;width:24.5px;height:360px;background:#f0f0f0;"></div>
<div class="a" style="left:246px;top:428px;width:24.5px;height:126px;background:#cdcdcd;"></div>
<svg class="a" style="left:252px;top:242px;" width="13" height="10" viewBox="0 0 13 10"><path d="M1.6 8 L6.5 3 L11.4 8" fill="none" stroke="#505050" stroke-width="2.4"/></svg>
<svg class="a" style="left:252px;top:575px;" width="13" height="10" viewBox="0 0 13 10"><path d="M1.6 2 L6.5 7 L11.4 2" fill="none" stroke="#505050" stroke-width="2.4"/></svg>
<div class="a" style="left:270.5px;top:233px;width:683.5px;height:360px;background:#fff;"></div>
<div class="a" style="left:272.5px;top:233px;width:1px;height:360px;background:#ececec;"></div>
<svg class="a" style="left:328.3px;top:258.7px" width="100" height="130" viewBox="-2 -2 100 130">
    <defs><linearGradient id="fb" x1="0" y1="0" x2="1" y2="0"><stop offset="0" stop-color="#ecc866"/><stop offset="0.35" stop-color="#f3d273"/><stop offset="1" stop-color="#fbdd80"/></linearGradient>
    <linearGradient id="ff" x1="0" y1="0" x2="1" y2="0"><stop offset="0" stop-color="#fde59a"/><stop offset="0.3" stop-color="#ffeaa6"/><stop offset="1" stop-color="#f8dc82"/></linearGradient>
    <linearGradient id="fs" x1="0" y1="0" x2="1" y2="0"><stop offset="0" stop-color="rgba(120,120,120,.18)"/><stop offset="1" stop-color="rgba(120,120,120,0)"/></linearGradient></defs>
    <path d="M80 102 L92 96.5 L80 96.5 Z" fill="url(#fs)"/><path d="M26 121.5 L40 114 L26 114 Z" fill="url(#fs)"/>
    <path d="M1 0 H73.3 Q74.3 0 74.3 1 V60.5 Q74.3 62.5 76 64 L79 66.8 Q80.5 68.3 80.5 70.5 V100 Q80.5 102 78.5 102 H20 V30 Z" fill="url(#fb)"/>
    <path d="M0 1 Q0 -0.6 1.4 0.4 L25.8 19 Q27.4 20.3 27.4 22.3 V83.5 Q27.4 85.3 26.4 86.8 Q25.5 88.3 25.5 90 V120.3 Q25.5 122.5 23.8 121.2 L1.2 103 Q0 102 0 100.5 Z" fill="url(#ff)"/>
    <path d="M27.4 22.3 V83.5 Q27.4 85.3 26.4 86.8 Q25.5 88.3 25.5 90 V102 H29 V24 Z" fill="rgba(200,160,60,.18)"/>
    </svg>
<svg class="a" style="left:492.4px;top:258.7px" width="100" height="130" viewBox="-2 -2 100 130">
    <defs><linearGradient id="fb" x1="0" y1="0" x2="1" y2="0"><stop offset="0" stop-color="#ecc866"/><stop offset="0.35" stop-color="#f3d273"/><stop offset="1" stop-color="#fbdd80"/></linearGradient>
    <linearGradient id="ff" x1="0" y1="0" x2="1" y2="0"><stop offset="0" stop-color="#fde59a"/><stop offset="0.3" stop-color="#ffeaa6"/><stop offset="1" stop-color="#f8dc82"/></linearGradient>
    <linearGradient id="fs" x1="0" y1="0" x2="1" y2="0"><stop offset="0" stop-color="rgba(120,120,120,.18)"/><stop offset="1" stop-color="rgba(120,120,120,0)"/></linearGradient></defs>
    <path d="M80 102 L92 96.5 L80 96.5 Z" fill="url(#fs)"/><path d="M26 121.5 L40 114 L26 114 Z" fill="url(#fs)"/>
    <path d="M1 0 H73.3 Q74.3 0 74.3 1 V60.5 Q74.3 62.5 76 64 L79 66.8 Q80.5 68.3 80.5 70.5 V100 Q80.5 102 78.5 102 H20 V30 Z" fill="url(#fb)"/>
    <path d="M0 1 Q0 -0.6 1.4 0.4 L25.8 19 Q27.4 20.3 27.4 22.3 V83.5 Q27.4 85.3 26.4 86.8 Q25.5 88.3 25.5 90 V120.3 Q25.5 122.5 23.8 121.2 L1.2 103 Q0 102 0 100.5 Z" fill="url(#ff)"/>
    <path d="M27.4 22.3 V83.5 Q27.4 85.3 26.4 86.8 Q25.5 88.3 25.5 90 V102 H29 V24 Z" fill="rgba(200,160,60,.18)"/>
    </svg>
<div class="t" style="left:331.07px;top:394.60px;font-size:17.6px;color:#000;transform:scaleX(0.9711);">Camera Roll</div>
<div class="t" style="left:484.88px;top:394.60px;font-size:17.6px;color:#000;transform:scaleX(0.9665);">Saved Pictures</div>
<div class="a" style="left:626px;top:242px;width:158px;height:177px;background:#cce8ff;border:1px solid #99d1ff"></div>
<div class="a" style="left:637px;top:307px;width:132.3px;height:74px;box-shadow:2px 2.5px 3px rgba(70,90,120,.6)">
    <svg width="132.3" height="74" viewBox="0 0 100 100" preserveAspectRatio="none" style="display:block">
    <defs><linearGradient id="sky" x1="0" y1="0" x2="0" y2="1"><stop offset="0" stop-color="#f1e8d8"/><stop offset="0.07" stop-color="#f6ecda"/><stop offset="0.15" stop-color="#efd9c2"/><stop offset="0.23" stop-color="#e5c5b3"/><stop offset="0.30" stop-color="#cfbbc9"/><stop offset="0.37" stop-color="#b6bcde"/><stop offset="0.46" stop-color="#b7d0ee"/><stop offset="0.60" stop-color="#a9c9ec"/><stop offset="1" stop-color="#9cc6ea"/></linearGradient>
    <linearGradient id="mid" x1="0" y1="0" x2="0" y2="1"><stop offset="0" stop-color="#1a86c6"/><stop offset="0.5" stop-color="#1f9bd1"/><stop offset="1" stop-color="#35addb"/></linearGradient>
    <linearGradient id="cy1" x1="0" y1="0" x2="0" y2="1"><stop offset="0" stop-color="#1a9bd2"/><stop offset="0.7" stop-color="#1aa5d8"/><stop offset="1" stop-color="#7cc6ea"/></linearGradient>
    <filter id="bl" x="-10%" y="-30%" width="120%" height="160%"><feGaussianBlur stdDeviation="0.9 1.2"/></filter>
    <filter id="bl2" x="-10%" y="-30%" width="120%" height="160%"><feGaussianBlur stdDeviation="0.5 0.7"/></filter></defs>
    <rect width="100" height="100" fill="url(#sky)"/>
    <path d="M0 6 C20 3 40 8 60 5 C75 3 90 7 100 5 V10 C80 12 60 9 40 12 C25 13 10 10 0 12 Z" fill="#fbf4e4" opacity=".7" filter="url(#bl)"/>
    <path d="M5 32 C15 30 25 31 35 30 C42 30 48 32 52 33 L40 36 H5 Z" fill="#a9b4dc" opacity=".7" filter="url(#bl)"/>
    <path d="M17 38 C22 36 27 35.5 32 36.5 C36 38 40 37 44 39.5 C46 41 44 44 38 44.5 H20 Z" fill="#7faadd" filter="url(#bl2)"/>
    <path d="M0 39.5 C5 37.5 12 38.5 16 38 C19 38.5 20 42 24 45 C27 47 30 47.5 29 49 C20 51 8 51.5 0 52.5 Z" fill="url(#cy1)" filter="url(#bl2)"/>
    <path d="M27.5 57.5 L29.5 55 L31.5 57.5 Z" fill="#4fa9de" filter="url(#bl2)"/>
    <path d="M0 58 C6 56.5 12 57.5 18 58 C16 61 8 63 4 66 L0 70 Z" fill="#1ca5d8" filter="url(#bl2)"/>
    <path d="M0 66 C5 63 12 62 17 63 L22 72 H0 Z" fill="#59b9e4" opacity=".8" filter="url(#bl)"/>
    <path d="M13 73 C18 70.5 22 68.5 25 69.5 C30 70 36 67 41 64.5 C46 61 50 60 55 60.5 C60 62 64 63.5 69 61.5 C76 59 84 54 90 50 C94 47.5 97 45 100 43 V100 H13 Z" fill="url(#mid)"/>
    <path d="M44 85 C50 81 56 78 61 75.5 C66 72 72 68.5 78 66 C86 63 93 60.5 100 58 V100 H44 Z" fill="#0762ab"/>
    <path d="M44 85 C50 81 56 78 61 75.5 C66 74 70 74 74 77 L60 100 H44 Z" fill="#0f6cb4" opacity=".6"/>
    <path d="M0 70 C3 71 5 73.5 9 74.5 C14 75.5 20 76 26 75.5 C31 75 35 77.5 39 81 C43 84.5 46 87.5 50 90 C55 92.5 61 94 65 96.5 L70 100 H0 Z" fill="#04185e"/>
    </svg></div>
<div class="t" style="left:676.08px;top:394.60px;font-size:17.6px;color:#000;transform:scaleX(1.0482);">001.jpg</div>
<svg class="a" style="left:780px;top:340px;" width="82" height="26" viewBox="0 0 82 26"><path d="M2.2 13.2 L25 5.6 L20 13.2 L25 20.8 Z" fill="#000"/><path d="M18 13.2 H58" stroke="#000" stroke-width="4"/>
      <circle cx="67.4" cy="13.2" r="8.8" fill="#fff" stroke="#000" stroke-width="3.6"/></svg>
<div class="t" style="left:222.38px;top:629.30px;font-size:17.6px;color:#000;transform:scaleX(0.9734);">File name:</div>
<div class="a" style="left:308.5px;top:619px;width:319.5px;height:33.5px;background:#fff;border:1px solid #7a7a7a"></div>
<div class="t" style="left:312.98px;top:629.60px;font-size:17.6px;color:#000;transform:scaleX(1.0500);">001.jpg</div>
<svg class="a" style="left:608px;top:632px;" width="13" height="8" viewBox="0 0 13 8"><path d="M1.5 1 L6.3 5.8 L11.1 1" fill="none" stroke="#555" stroke-width="1.1"/></svg>
<div class="a" style="left:646px;top:619px;width:282px;height:32.5px;background:#e1e1e1;border:1px solid #adadad"></div>
<div class="t" style="left:651.00px;top:629.60px;font-size:17.6px;color:#000;transform:scaleX(1.0196);">All Pictures (*.emf;*.wmf;*.jpg;*.</div>
<svg class="a" style="left:908px;top:632px;" width="13" height="8" viewBox="0 0 13 8"><path d="M1.5 1 L6.3 5.8 L11.1 1" fill="none" stroke="#555" stroke-width="1.1"/></svg>
<div class="t" style="left:549.25px;top:673.80px;font-size:17.6px;color:#000;transform:scaleX(0.9925);">Tools</div>
<svg class="a" style="left:609.5px;top:677px;" width="12.5" height="6.5" viewBox="0 0 12.5 6.5"><path d="M0.3 0.2 H12.2 L6.25 6.3 Z" fill="#000"/></svg>
<div class="a" style="left:638.5px;top:656px;width:145.5px;height:50px;background:transparent;border:4px solid #000;border-radius:7px"></div>
<div class="a" style="left:647px;top:662px;width:130.5px;height:37px;background:#e1e1e1;border:2px solid #0078d7"></div>
<div class="a" style="left:752.8px;top:665px;width:1.2px;height:31px;background:#5a5a5a;"></div>
<div class="t" style="left:676.49px;top:673.80px;font-size:17.6px;color:#000;transform:scaleX(1.0059);">Insert</div>
<svg class="a" style="left:756px;top:676.5px;" width="17" height="9" viewBox="0 0 17 9"><path d="M0.6 0.3 H16.2 L8.4 8.3 Z" fill="#000"/></svg>
<div class="a" style="left:797px;top:662px;width:130px;height:37px;background:#e1e1e1;border:1px solid #adadad"></div>
<div class="t" style="left:835.48px;top:673.80px;font-size:17.6px;color:#000;transform:scaleX(0.9638);">Cancel</div>
<svg class="a" style="left:940px;top:705px;" width="11" height="11" viewBox="0 0 11 11"><rect x="8" y="0" width="3" height="3" fill="#b6b6b6"/><rect x="4" y="4" width="3" height="3" fill="#b6b6b6"/><rect x="8" y="4" width="3" height="3" fill="#b6b6b6"/><rect x="0" y="8" width="3" height="3" fill="#b6b6b6"/><rect x="4" y="8" width="3" height="3" fill="#b6b6b6"/><rect x="8" y="8" width="3" height="3" fill="#b6b6b6"/></svg>
</div>
</body>
</html>
